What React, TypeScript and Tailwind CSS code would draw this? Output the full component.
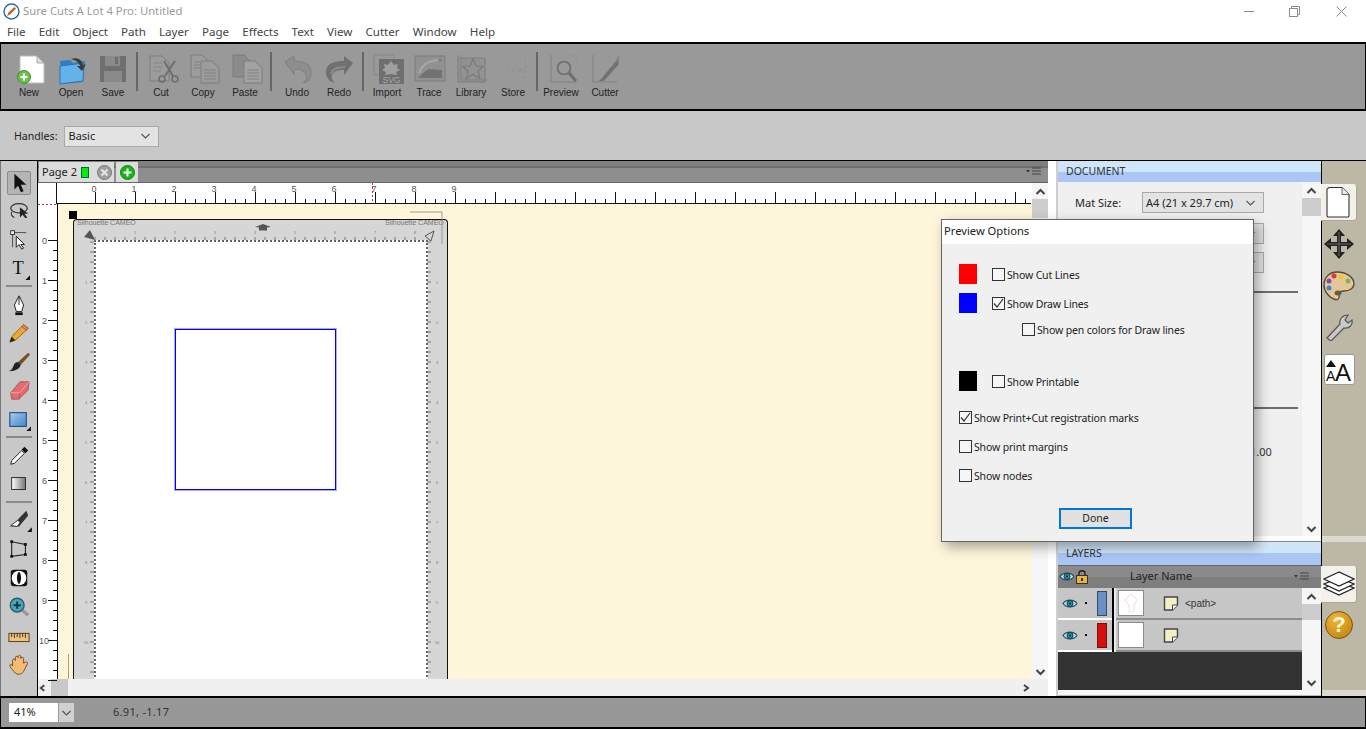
import React from "react";

const ui = { fontFamily: '"Noto Sans", "Liberation Sans", sans-serif' };
const arial = { fontFamily: '"Liberation Sans", Arial, sans-serif' };

const Chev = ({ dir = "down", c = "#444", w = 2 }: { dir?: string; c?: string; w?: number }) => (
  <svg width="11" height="8" viewBox="0 0 11 8">
    <path
      d={dir === "down" ? "M1.5 2 L5.5 6 L9.5 2" : dir === "up" ? "M1.5 6 L5.5 2 L9.5 6" : dir === "left" ? "M7 1 L3 4 L7 7" : "M4 1 L8 4 L4 7"}
      fill="none"
      stroke={c}
      strokeWidth={w}
    />
  </svg>
);

const GD = "#7c7c7c";
const GL = "#9c9c9c";

const Page = ({ x = 0, y = 0, w = 20, h = 26, f = GL, s = GD }: any) => (
  <path d={`M${x} ${y}h${w - 7}l7 7v${h - 7}h-${w}z`} fill={f} stroke={s} strokeWidth="1" />
);

const toolIcons: Record<string, React.ReactNode> = {
  New: (
    <>
      <path d="M7 2h17l7 7v20H7z" fill="#fff" stroke="#bbb" />
      <path d="M24 2v7h7z" fill="#ddd" stroke="#aaa" />
      <circle cx="11" cy="23" r="6.5" fill="#6cc04a" stroke="#3d8b2a" />
      <path d="M11 19.500v7M7.500 23h7" stroke="#fff" strokeWidth="2.2" />
    </>
  ),
  Open: (
    <>
      <path d="M3 7l10-1 3 3 12-2-2 21-22 2z" fill="#2f7fc6" />
      <path d="M3 12l24-3-1 18-23 3z" fill="#63b3ea" stroke="#2c75b5" />
      <path d="M14 5c6-2 11 0 12 6l3-1-4 7-5-5 3 0c-1-4-5-6-9-7z" fill="#3b3b3b" />
    </>
  ),
  Save: (
    <>
      <path d="M2 2h26v26H2z" fill="#6f6f6f" />
      <path d="M7 2h15v10H7z" fill="#8a8a8a" />
      <path d="M17 3h3v7h-3z" fill="#6f6f6f" />
      <path d="M6 17h18v11H6z" fill="#8a8a8a" />
    </>
  ),
  Cut: (
    <>
      <Page x={3} y={2} w={19} h={25} />
      <path d="M6 9h9M6 13h9M6 17h8" stroke="#858585" />
      <path d="M17 7l9 15M28 7l-10 15" stroke="#6e6e6e" strokeWidth="2" />
      <circle cx="15" cy="25" r="3" fill="none" stroke="#6e6e6e" strokeWidth="1.6" />
      <circle cx="28" cy="25" r="3" fill="none" stroke="#6e6e6e" strokeWidth="1.6" />
    </>
  ),
  Copy: (
    <>
      <Page x={1} y={1} w={18} h={22} />
      <Page x={11} y={7} w={18} h={22} />
      <path d="M14 16h12M14 19h12M14 22h12M14 25h12" stroke="#828282" />
      <path d="M4 8h6M4 11h6M4 14h6" stroke="#828282" />
    </>
  ),
  Paste: (
    <>
      <Page x={1} y={1} w={18} h={22} f="#8b8b8b" />
      <Page x={12} y={7} w={18} h={22} f="#a2a2a2" />
      <path d="M15 16h12M15 19h12M15 22h12M15 25h12" stroke="#828282" />
    </>
  ),
  Undo: (
    <path d="M3 8l9-6v5c9 0 17 3 17 12 0 5-3 9-8 10 3-2 4-5 3-8-1-5-6-6-12-6v5z" fill="#8e8e8e" stroke="#828282" strokeWidth="1.2" />
  ),
  Redo: (
    <>
      <path d="M29 9l-9-7v5C11 7 2 9 2 18c0 6 4 10 9 11-3-2-4-5-3-8 1-4 6-5 12-5v5z" fill="#707070" />
      <path d="M7 20c1-5 7-7 14-7" stroke="#8a8a8a" strokeWidth="2" fill="none" />
    </>
  ),
  Import: (
    <>
      <rect x="1" y="1" width="20" height="20" fill="none" stroke="#858585" />
      <rect x="6" y="5" width="25" height="25" fill="#6f6f6f" />
      <path d="M18 7l3 4 4-1-1 4 3 2-4 2 1 3-6-1-6 1 1-3-4-2 3-2-1-4 4 1z" fill="#a0a0a0" />
      <text x="18.5" y="29" textAnchor="middle" fontSize="8.500" fill="#a8a8a8" style={arial}>SVG</text>
    </>
  ),
  Trace: (
    <>
      <rect x="1" y="2" width="30" height="25" fill="#919191" stroke="#7d7d7d" />
      <path d="M5 19C8 11 14 6 26 6" fill="none" stroke="#a8a8a8" strokeWidth="2" />
      <path d="M10 18l5-3 13 1v8H4z" fill="#727272" />
      <circle cx="26" cy="6" r="1.500" fill="#777" />
    </>
  ),
  Library: (
    <>
      <path d="M2 2v26h27V4H5" fill="#929292" stroke="#7d7d7d" />
      <path d="M5 1v25h26" fill="none" stroke="#808080" />
      <path d="M17 5l3 7 7 .5-5 5 2 7-7-4-7 4 2-7-5-5 7-.5z" fill="none" stroke="#7a7a7a" strokeWidth="1.2" />
    </>
  ),
  Store: (
    <g stroke="#8e8e8e" strokeDasharray="2 3">
      <path d="M27 2v26M9 15h14M16 6v20" />
      <circle cx="22" cy="16" r="1" fill="#8e8e8e" />
    </g>
  ),
  Preview: (
    <>
      <path d="M3 1v27h25" fill="none" stroke="#808080" />
      <path d="M19 1l9 0v14" fill="none" stroke="#8e8e8e" strokeDasharray="2 2" />
      <circle cx="16" cy="14" r="6.500" fill="none" stroke="#6e6e6e" strokeWidth="1.6" />
      <path d="M21 19l7 8" stroke="#6e6e6e" strokeWidth="3" />
    </>
  ),
  Cutter: (
    <>
      <path d="M2 1v27h24" fill="none" stroke="#808080" />
      <path d="M10 25L25 7l3 3-15 17z" fill="#727272" />
      <path d="M25 7l3-6 0 9z" fill="#7c7c7c" />
      <path d="M8 27l2-2 3 2z" fill="#6e6e6e" />
    </>
  ),
};

const dx: Record<string, number> = { New: 0, Open: 2, Save: 1, Cut: 2, Copy: 3, Paste: 3, Undo: 1, Redo: 1, Import: 2, Trace: 1, Library: 1, Store: 1, Preview: 3, Cutter: 2 };

const ToolBtn = ({ name, mt = "" }: { name: string; mt?: string }) => (
  <div className={`w-[42px] flex flex-col items-center ${mt}`}>
    <svg width="32" height="32" viewBox="0 0 32 32" className="overflow-visible">
      <g transform={`translate(${dx[name]} 2)`}>{toolIcons[name]}</g>
    </svg>
    <div className="mt-[3px] text-[10px] leading-[12px] text-[#222]" style={arial}>{name}</div>
  </div>
);

const Sep = ({ w }: { w: string }) => (
  <div className={`${w} flex justify-center`}>
    <div className="w-[2px] h-[39px] bg-[#666]" />
  </div>
);

const side: Record<string, React.ReactNode> = {
  arrow: <path d="M7 2l0 17 4-4 3 7 3-1-3-7h6z" fill="#111" />,
  lasso: (
    <>
      <ellipse cx="12" cy="9" rx="9" ry="5" fill="none" stroke="#333" strokeWidth="1.4" />
      <path d="M4 13c-1 3 0 5 3 6" fill="none" stroke="#333" strokeWidth="1.2" />
      <path d="M13 8v11l3-3 3 4 2-1-3-4h4z" fill="#222" />
    </>
  ),
  node: (
    <>
      <rect x="3" y="3" width="4" height="4" fill="#fff" stroke="#222" />
      <path d="M7 5h13M5 7v14" stroke="#444" />
      <path d="M9 9v12l3-3 3 5 2-1-3-4h4z" fill="#fff" stroke="#111" />
    </>
  ),
  text: (
    <>
      <text x="11" y="19" textAnchor="middle" fontSize="20" fill="#111" style={{ fontFamily: '"Liberation Serif", serif' }}>T</text>
      <path d="M24 20v5h-5z" fill="#111" />
    </>
  ),
  pen: (
    <>
      <path d="M12 2l5 10-2 7H9L7 12z" fill="#fff" stroke="#111" strokeWidth="1" />
      <path d="M12 3v9" stroke="#111" />
      <rect x="8" y="20" width="8" height="3" fill="#111" />
    </>
  ),
  pencil: (
    <>
      <path d="M17 3l5 4L8 20l-6 2 2-6z" fill="#f0a62e" stroke="#9a5f0e" />
      <path d="M17 3l5 4-2 2-5-4z" fill="#e88080" stroke="#9a5f0e" />
      <path d="M4 16l-2 6 6-2z" fill="#222" />
    </>
  ),
  brush: (
    <>
      <path d="M22 2l2 2-10 11-3-3z" fill="#7a4d22" />
      <path d="M11 12l3 3c-1 4-5 7-13 7 4-2 4-4 5-6 1-3 3-4 5-4z" fill="#222" />
    </>
  ),
  eraser: (
    <>
      <path d="M3 15L13 3h10l-1 9-10 10H4z" fill="#e46b72" stroke="#a55" />
      <path d="M3 15h10l10-12" fill="none" stroke="#f3a6aa" />
      <path d="M13 15l-1 7" stroke="#a55" />
    </>
  ),
  rect: (
    <>
      <defs>
        <linearGradient id="rg" x1="0" y1="0" x2="1" y2="1">
          <stop offset="0" stopColor="#a9cdee" />
          <stop offset="1" stopColor="#3f86c6" />
        </linearGradient>
      </defs>
      <rect x="2" y="4" width="18" height="15" fill="url(#rg)" stroke="#1f4f82" strokeWidth="1.2" />
      <path d="M25 19v5h-5z" fill="#111" />
    </>
  ),
  drop: (
    <>
      <path d="M18 2l4 4-3 3-4-4z" fill="#111" />
      <path d="M15 6l3 3L7 20l-4 1 1-4z" fill="#fff" stroke="#111" />
    </>
  ),
  grad: (
    <>
      <defs>
        <linearGradient id="gg">
          <stop offset="0" stopColor="#fff" />
          <stop offset="1" stopColor="#777" />
        </linearGradient>
      </defs>
      <rect x="4" y="5" width="15" height="13" fill="url(#gg)" stroke="#222" />
    </>
  ),
  knife: (
    <>
      <path d="M20 2l2 5-10 12H2c4-2 8-5 10-9z" fill="#333" />
      <path d="M3 18l8-6 2 3-3 4z" fill="#fff" stroke="#333" />
      <path d="M26 20v5h-5z" fill="#111" />
    </>
  ),
  poly: (
    <>
      <path d="M4 4l15 3 0 11-15 2z" fill="none" stroke="#222" strokeWidth="1.2" />
      <rect x="2.500" y="2.500" width="3" height="3" fill="#111" />
      <rect x="17.500" y="5.500" width="3" height="3" fill="#111" />
      <rect x="17.500" y="16.500" width="3" height="3" fill="#111" />
      <rect x="2.500" y="18.500" width="3" height="3" fill="#111" />
    </>
  ),
  circ: (
    <>
      <rect x="3" y="3" width="18" height="18" rx="3" fill="#111" />
      <ellipse cx="12" cy="12" rx="8" ry="8" fill="#fff" />
      <path d="M12 5c-3 3-3 11 0 14 3-3 3-11 0-14z" fill="#111" />
    </>
  ),
  zoom: (
    <>
      <path d="M15 15l7 6" stroke="#999" strokeWidth="3.500" />
      <circle cx="10" cy="10" r="7.500" fill="#4aa6b5" stroke="#2c5a74" strokeWidth="1.600" />
      <path d="M10 6v8M6 10h8" stroke="#0c3a48" strokeWidth="2.200" />
    </>
  ),
  ruler: (
    <>
      <rect x="1" y="8" width="22" height="9" fill="#edc27e" stroke="#4a3a18" />
      <path d="M4 8v4M7 8v5M10 8v4M13 8v5M16 8v4M19 8v5" stroke="#3a2a10" />
    </>
  ),
  hand: (
    <path d="M5 13V7c0-2 3-2 3 0V4c0-2 3-2 3 0v-1c0-2 3-2 3 0v2c0-2 3-2 3 0v5l2-1c2-1 3 1 2 2l-4 8c-1 2-3 3-5 3h-2c-3-1-4-4-7-7l-1-2c0-2 2-2 3 0z" fill="#f4bb74" stroke="#6a4a20" />
  ),
};

const sideItems: [string, string][] = [
  ["arrow", "mt-[8px]"], ["lasso", ""], ["node", ""], ["text", "mt-[1px]"], ["SEP", "mt-[3px]"],
  ["pen", "mt-[4px]"], ["pencil", ""], ["brush", "mt-[1px]"], ["eraser", ""], ["rect", "mt-[2px]"], ["SEP", "mt-[2px]"],
  ["drop", "mt-[4px]"], ["grad", ""], ["SEP", "mt-[3px]"], ["knife", "mt-[3px]"], ["poly", "mt-[1px]"], ["circ", "mt-[1px]"],
  ["zoom", "mt-[1px]"], ["ruler", "mt-[2px]"], ["hand", ""],
];

const LeftTools = () => (
  <div className="w-[38px] shrink-0 flex flex-col items-center bg-[#c8c8c8] border-r border-black border-l border-l-[#777]">
    {sideItems.map(([n, m], i) =>
      n === "SEP" ? (
        <div key={i} className={`h-[2px] w-[26px] bg-[#8a8a8a] shrink-0 ${m}`} />
      ) : (
        <div key={i} className={`h-[28px] w-[26px] flex items-center justify-center shrink-0 ${m}`}>
          <div className={n === "arrow" ? "w-[24px] h-[24px] flex items-center justify-center rounded-[2px] bg-[#b4b4b4] border border-[#8c8c8c]" : ""}>
            <svg width="22" height="22" viewBox="0 0 24 24" className="overflow-visible">{side[n]}</svg>
          </div>
        </div>
      )
    )}
  </div>
);

const MenuIcon = () => (
  <svg width="16" height="9" viewBox="0 0 16 9">
    <path d="M0 3h4L2 5.500z" fill="#333" />
    <path d="M6 1h9M6 4h9M6 7h9" stroke="#444" />
  </svg>
);

const TopRuler = () => (
  <svg width="993" height="21" className="block">
    {Array.from({ length: 94 }, (_, i) => {
      const x = 57 + i * 10;
      const major = i % 4 === 0;
      return <line key={i} x1={x + 0.5} x2={x + 0.5} y1={major ? 9 : 16} y2={20} stroke="#111" />;
    })}
    {Array.from({ length: 10 }, (_, i) => (
      <text key={i} x={56 + i * 40} y={8.5} textAnchor="middle" fontSize="9" fill="#555" style={arial}>{i}</text>
    ))}
    <line x1="334.5" x2="334.5" y1="0" y2="20" stroke="#b33" strokeDasharray="2 2" />
    <line x1="18.5" x2="18.5" y1="0" y2="20" stroke="#111" />
    <line x1="18" x2="993" y1="20.5" y2="20.5" stroke="#111" />
  </svg>
);

const LeftRuler = () => (
  <div className="w-[20px] shrink-0 bg-white relative border-r border-black">
    <svg width="19" height="477" className="block">
      {Array.from({ length: 48 }, (_, i) => {
        const y = 36 + i * 10;
        const major = i % 4 === 0;
        return <line key={i} x1={major ? 10 : 15} x2={19} y1={y + 0.5} y2={y + 0.5} stroke="#111" />;
      })}
      {Array.from({ length: 11 }, (_, i) => (
        <text key={i} x={i === 10 ? 1 : 4} y={40 + i * 40} fontSize="9" fill="#555" style={arial}>{i}</text>
      ))}
      <line x1="0" x2="19" y1="0.5" y2="0.5" stroke="#b33" strokeDasharray="2 2" />
    </svg>
  </div>
);

const MatOverlay = () => (
  <svg width="375" height="461" className="absolute left-0 top-0 pointer-events-none overflow-visible">
    <text x="3" y="4.500" fontSize="7" fill="#777" style={arial}>Silhouette CAMEO</text>
    <text x="311" y="4.500" fontSize="7" fill="#777" style={arial}>Silhouette CAMEO</text>
    <path d="M336 -8h32v32" fill="none" stroke="#999" />
    <path d="M181 7l8-3 8 3-4 .5v3h-8v-3z" fill="#555" />
    <path d="M10 17l6-7 5 10z" fill="#555" />
    <path d="M351 16l9-5-3 10z" fill="none" stroke="#555" />
    {Array.from({ length: 33 }, (_, i) => (
      <line key={i} x1={21 + i * 10} x2={21 + i * 10} y1={17} y2={20} stroke="#777" />
    ))}
    {Array.from({ length: 44 }, (_, i) => (
      <g key={i} stroke="#777">
        <line x1="16" x2="20" y1={22 + i * 10} y2={22 + i * 10} />
        <line x1="353" x2="357" y1={22 + i * 10} y2={22 + i * 10} />
      </g>
    ))}
    {Array.from({ length: 8 }, (_, i) => (
      <text key={i} x={61 + i * 40} y={14} fontSize="4" fill="#777" textAnchor="middle" style={arial}>{i + 1}</text>
    ))}
    {Array.from({ length: 10 }, (_, i) => (
      <g key={i}>
        <text x="12" y={64 + i * 40} fontSize="4" fill="#777" textAnchor="middle" style={arial}>{i + 1}</text>
        <text x="363" y={64 + i * 40} fontSize="4" fill="#777" textAnchor="middle" style={arial}>{i + 1}</text>
      </g>
    ))}
  </svg>
);

const Canvas = () => (
  <div className="flex-1 relative overflow-hidden bg-[#fef6db] pl-[15px] pt-[15px]">
    <div className="relative w-[375px] h-[600px] rounded-t-[4px] border border-b-0 border-[#111] bg-[#d6d6d6] pl-[20px] pt-[20px]">
      <div className="w-[334px] h-[600px] bg-white border-t-2 border-x-2 border-dotted border-[#666] pl-[79px] pt-[87px]">
        <div className="w-[161px] h-[161px] border border-[#0000ff] shadow-[0_0_0_1px_rgba(40,40,230,0.4)]" />
      </div>
      <MatOverlay />
    </div>
    <div className="absolute left-[11px] top-[7px] w-[8px] h-[8px] bg-black" />
    <div className="absolute left-[10px] top-[450px] w-px h-[30px] bg-[#aaa07c]" />
  </div>
);

const VScroll = ({ w = "w-[16px]", thumbH }: { w?: string; thumbH: string }) => (
  <div className={`${w} shrink-0 self-stretch flex flex-col items-center bg-[#f6f6f6]`}>
    <div className="h-[16px] shrink-0 flex items-center pt-[2px]"><Chev dir="up" /></div>
    <div className="flex-1 w-full">
      <div className={`w-full bg-[#cdcdcd] ${thumbH}`} />
    </div>
    <div className="h-[14px] shrink-0 flex items-center"><Chev /></div>
  </div>
);

const Sel = ({ label, cls }: { label: string; cls: string }) => (
  <div className={`${cls} h-[21px] flex items-center justify-between bg-[#e3e3e3] border border-[#a9a9a9] pl-[3px] pr-[7px] text-[11px] text-[#222]`}>
    <span className="pt-[1px]">{label}</span>
    <Chev c="#555" w={1.2} />
  </div>
);

const PanelHeader = ({ t, h }: { t: string; h: string }) => (
  <div className={`${h} shrink-0 relative pl-[8px] flex items-center text-[10.500px] text-[#333] bg-[linear-gradient(#cfe5f8_0%,#cfe5f8_50%,#a9c6f4_50%,#a9c6f4_100%)]`}>{t}</div>
);

const Eye = () => (
  <svg width="16" height="11" viewBox="0 0 16 11">
    <path d="M1 5.500C4 1 12 1 15 5.500 12 10 4 10 1 5.500z" fill="#bfe3ec" stroke="#1d4f66" strokeWidth="1.200" />
    <circle cx="8" cy="5.500" r="3" fill="#2f8ea8" stroke="#10384a" />
    <circle cx="8" cy="5.500" r="1" fill="#06212c" />
  </svg>
);

const Note = () => (
  <svg width="16" height="15" viewBox="0 0 16 15">
    <path d="M1.500 1h13v8l-5 5h-8z" fill="#f2efc6" stroke="#444" strokeWidth="1.400" strokeLinejoin="round" />
    <path d="M14.500 9h-5v5" fill="#fff" stroke="#444" />
  </svg>
);

const LayerRow = ({ color, bd, thumb, label }: { color: string; bd: string; thumb: React.ReactNode; label?: string }) => (
  <div className="h-[32px] flex bg-[#c6c6c6]">
    <div className="w-[54px] flex items-center border-b-2 border-white">
      <div className="ml-[4px]"><Eye /></div>
      <div className="ml-[7px] w-[2px] h-[2px] bg-black" />
      <div className={`ml-[10px] w-[10px] h-[25px] ${color} border ${bd}`} />
    </div>
    <div className="w-[2px] bg-black" />
    <div className="w-[2px] bg-[#e9e9e9]" />
    <div className="flex-1 flex items-center border-b-2 border-[#8d8d8d]">
      <div className="w-[26px] h-[26px] bg-white border border-[#8a8a8a] flex items-center justify-center ml-[2px]">{thumb}</div>
      <div className="ml-[19px]"><Note /></div>
      {label && <span className="ml-[6px] text-[10px] text-[#333]" style={arial}>{label}</span>}
    </div>
  </div>
);

const RightPanels = () => (
  <div className="w-[263px] shrink-0 flex flex-col bg-white">
    <PanelHeader t="DOCUMENT" h="h-[21px]" />
    <div className="h-[354px] flex bg-[#f0f0f0] overflow-hidden">
      <div className="w-[244px] shrink-0">
        <div className="flex items-center mt-[10px] pl-[17px]">
          <span className="w-[67px] text-[11px] text-[#222] pt-[1px]">Mat Size:</span>
          <Sel label="A4 (21 x 29.7 cm)" cls="w-[122px]" />
        </div>
        <div className="ml-[84px]"><Sel label="" cls="w-[122px] mt-[10px]" /></div>
        <div className="ml-[84px]"><Sel label="" cls="w-[122px] mt-[8px]" /></div>
        <div className="h-[2px] bg-[#6d6d6d] ml-[6px] mr-[4px] mt-[18px]" />
        <div className="h-[2px] bg-[#6d6d6d] ml-[6px] mr-[4px] mt-[114px]" />
        <div className="mt-[36px] ml-[192px] text-[11px] leading-[14px] text-[#333]">1.00</div>
      </div>
      <VScroll w="w-[19px]" thumbH="h-[18px]" />
    </div>
    <div className="h-[6px] shrink-0 bg-white border-b border-[#8a8a8a]" />
    <PanelHeader t="LAYERS" h="h-[23px]" />
    <div className="h-[23px] shrink-0 flex items-center relative pb-[1px] text-[11px] text-[#222] bg-[linear-gradient(#8a8a8a_0%,#8a8a8a_50%,#7e7e7e_50%,#7e7e7e_100%)] border-t border-[#666]">
      <div className="ml-[1px]"><Eye /></div>
      <svg width="12" height="15" viewBox="0 0 12 15" className="ml-[1px]">
        <path d="M3 7V4c0-3 6-3 6 0v3" fill="none" stroke="#222" strokeWidth="1.400" />
        <rect x="0.500" y="6.500" width="11" height="8" fill="#e9b33e" stroke="#333" />
        <rect x="5" y="9" width="2" height="3" fill="#333" />
      </svg>
      <span className="ml-[42px]">Layer Name</span>
      <div className="ml-auto mr-[3px]"><MenuIcon /></div>
      <div className="w-[8px]" />
    </div>
    <div className="h-[102px] shrink-0 flex">
      <div className="w-[244px] shrink-0 flex flex-col bg-[#333]">
        <LayerRow
          color="bg-[#6a8fc4]"
          bd="border-[#344a70]"
          label="<path>"
          thumb={
            <svg width="22" height="22" viewBox="0 0 22 22">
              <path d="M11 2l6 6-3 5v7H9v-7L5 8z" fill="none" stroke="#f5dada" />
            </svg>
          }
        />
        <LayerRow color="bg-[#d60f0f]" bd="border-[#7a1010]" thumb={null} />
      </div>
      <VScroll w="w-[19px]" thumbH="h-[16px]" />
    </div>
    <div className="flex-1 bg-[#f6f6f6] border-b border-[#bbb]" />
  </div>
);

const RightTabs = () => (
  <div className="w-[45px] shrink-0 flex flex-col bg-[#bdb8a6] border-l border-black">
    <div className="h-[375px] shrink-0 flex flex-col">
      <div className="mt-[23px] w-[36px] h-[37px] ml-[-1px] bg-[#f3f1ea] rounded-r-[3px] border-b border-r border-[#aaa69a] flex items-center justify-center">
        <svg width="26" height="32" viewBox="0 0 26 32">
          <path d="M3 1.500h13l7 7v21a1.500 1.500 0 0 1-1.500 1.500h-19a1.500 1.500 0 0 1-1.500-1.500v-26.500z" fill="#fff" stroke="#333" strokeWidth="1.100" />
          <path d="M16 1.500v7h7" fill="#eee" stroke="#666" />
        </svg>
      </div>
      <svg width="30" height="30" viewBox="0 0 30 30" className="mt-[8px] ml-[2px]">
        <path d="M15 0l6 7h-4v6h6V9l7 6-7 6v-4h-6v6h4l-6 7-6-7h4v-6H7v4l-7-6 7-6v4h6V7H9z" fill="#222" />
        <path d="M15 3v24M3 15h24" stroke="#666" strokeWidth="1" />
      </svg>
      <svg width="32" height="32" viewBox="0 0 32 32" className="mt-[11px] ml-[1px]">
        <path d="M14 2C6 2 1 8 1 15s6 13 10 14c4 2 6-1 5-4s2-4 5-4c6 0 10-3 10-7C31 7 23 2 14 2z" fill="#e3c79a" stroke="#5b4a30" strokeWidth="1.400" />
        <circle cx="11" cy="6" r="2.500" fill="#d83a3a" />
        <circle cx="18" cy="7" r="2.500" fill="#edc63c" />
        <circle cx="25" cy="11" r="2.500" fill="#7fb550" />
        <circle cx="6" cy="11" r="2.500" fill="#7a4db0" />
        <circle cx="6" cy="18" r="2.500" fill="#3d86d0" />
        <ellipse cx="15" cy="23" rx="3.500" ry="2.500" fill="#6b5a40" />
      </svg>
      <svg width="28" height="28" viewBox="0 0 28 28" className="mt-[11px] ml-[3px]">
        <path d="M2 25l13-14c-1-4 2-9 8-9l-3 5 3 3 4-3c1 5-3 9-8 8L6 28z" fill="#c9c9c9" stroke="#555" strokeWidth="1.200" />
      </svg>
      <div className="mt-[13px] ml-[2px] w-[31px] h-[31px] rounded-[3px] bg-white border border-[#999] relative">
        <svg width="29" height="29" viewBox="0 0 29 29" className="overflow-visible">
          <text x="1" y="26" fontSize="14" fill="#111" style={arial}>A</text>
          <text x="10" y="26" fontSize="24" fill="#111" style={arial}>A</text>
          <path d="M6 5l5 7H1z" fill="#111" />
        </svg>
      </div>
    </div>
    <div className="h-[6px] shrink-0 bg-[#dcd9cd]" />
    <div className="h-[148px] shrink-0 flex flex-col">
      <div className="mt-[24px] w-[36px] h-[37px] ml-[-1px] bg-[#f3f1ea] rounded-r-[3px] border-b border-r border-[#aaa69a] flex items-center justify-center">
        <svg width="32" height="28" viewBox="0 0 32 28">
          <path d="M16 12L1 18l15 7 15-7z" fill="#fff" stroke="#222" strokeWidth="1.300" />
          <path d="M16 8L1 14l15 7 15-7z" fill="#fff" stroke="#222" strokeWidth="1.300" />
          <path d="M16 2L1 9l15 7 15-7z" fill="#fff" stroke="#222" strokeWidth="1.300" />
        </svg>
      </div>
      <div className="mt-[8px] ml-[3px] w-[28px] h-[28px] rounded-full bg-[radial-gradient(circle_at_40%_30%,#f2b733,#b97c10)] border border-[#7a5410] flex items-center justify-center text-[#fff8dc] text-[22px] font-bold leading-none" style={arial}>?</div>
    </div>
    <div className="flex-1 bg-[#dcd9cd]" />
  </div>
);

const Check = ({ checked = false }: { checked?: boolean }) => (
  <div className="w-[13px] h-[13px] shrink-0 border border-[#333] bg-[#f6f6f6] flex items-center justify-center">
    {checked && (
      <svg width="11" height="11" viewBox="0 0 11 11">
        <path d="M1 5.500L4 9l6-8" fill="none" stroke="#333" strokeWidth="1.200" />
      </svg>
    )}
  </div>
);

const Opt = ({ label, checked, cls }: { label: string; checked?: boolean; cls: string }) => (
  <div className={`flex items-center h-[13px] ${cls}`}>
    <Check checked={checked} />
    <span className="ml-[2px] pt-[2px] text-[10.500px] tracking-[-0.15px] leading-[13px] text-[#222] whitespace-nowrap">{label}</span>
  </div>
);

const ColorOpt = ({ color, label, checked, cls }: { color: string; label: string; checked?: boolean; cls: string }) => (
  <div className={`flex items-center h-[20px] ml-[17px] ${cls}`}>
    <div className={`w-[18px] h-[20px] ${color}`} />
    <Opt label={label} checked={checked} cls="ml-[15px]" />
  </div>
);

const Dialog = () => (
  <div className="absolute left-[941px] top-[219px] w-[313px] h-[323px] border border-[#666] bg-[#f0f0f0] shadow-[4px_5px_12px_rgba(0,0,0,0.35)]">
    <div className="h-[24px] bg-white pl-[2px] pb-[1px] flex items-center text-[11.200px] text-[#222]">Preview Options</div>
    <ColorOpt color="bg-[#ff0000]" label="Show Cut Lines" cls="mt-[20px]" />
    <ColorOpt color="bg-[#0000ff]" label="Show Draw Lines" checked cls="mt-[9px]" />
    <Opt label="Show pen colors for Draw lines" cls="ml-[80px] mt-[10px]" />
    <ColorOpt color="bg-black" label="Show Printable" cls="mt-[35px]" />
    <Opt label="Show Print+Cut registration marks" checked cls="ml-[17px] mt-[20px]" />
    <Opt label="Show print margins" cls="ml-[17px] mt-[16px]" />
    <Opt label="Show nodes" cls="ml-[17px] mt-[16px]" />
    <div className="ml-[117px] mt-[26px] w-[73px] h-[21px] border-2 border-[#0078d7] bg-[#e1e1e1] flex items-center justify-center text-[10.500px] text-[#222]">Done</div>
  </div>
);

export default function App() {
  const menus = ["File", "Edit", "Object", "Path", "Layer", "Page", "Effects", "Text", "View", "Cutter", "Window", "Help"];
  return (
    <div className="relative w-[1366px] h-[729px] overflow-hidden flex flex-col bg-white" style={ui}>
      {/* title bar */}
      <div className="h-[22px] shrink-0 flex items-center pl-[3px] pt-[1px]">
        <svg width="17" height="17" viewBox="0 0 17 17">
          <circle cx="8.500" cy="8.500" r="7.500" fill="#fff" stroke="#1e6ea8" strokeWidth="1.400" />
          <path d="M4 13l1.500-3.500L11.500 4l1.500 1.500-6 6z" fill="#c25a22" />
        </svg>
        <span className="ml-[3px] text-[11.300px] text-[#9a9a9a]">Sure Cuts A Lot 4 Pro: Untitled</span>
        <div className="ml-auto flex items-center">
          <div className="w-[10px] h-px bg-[#8a8a8a]" />
          <svg width="11" height="11" viewBox="0 0 11 11" className="ml-[35px]">
            <path d="M2.500 2.500V.5h8v8h-2" fill="none" stroke="#8a8a8a" />
            <rect x="0.500" y="2.500" width="8" height="8" fill="none" stroke="#8a8a8a" />
          </svg>
          <svg width="11" height="11" viewBox="0 0 11 11" className="ml-[36px] mr-[19px]">
            <path d="M.5.5l10 10M10.500.5l-10 10" stroke="#8a8a8a" />
          </svg>
        </div>
      </div>
      {/* menu */}
      <div className="h-[20px] shrink-0 flex items-center pl-[7px] gap-[13.100px] text-[11.600px] text-[#444]">
        {menus.map((m) => <span key={m}>{m}</span>)}
      </div>
      {/* toolbar */}
      <div className="h-[69px] shrink-0 bg-[#999] border-t-2 border-b-2 border-x border-black pl-[7px] pt-[8px] flex items-start">
        {["New", "Open", "Save"].map((n) => <ToolBtn key={n} name={n} />)}
        <Sep w="w-[6px]" />
        {["Cut", "Copy", "Paste"].map((n) => <ToolBtn key={n} name={n} />)}
        <Sep w="w-[10px]" />
        {["Undo", "Redo"].map((n) => <ToolBtn key={n} name={n} />)}
        <Sep w="w-[6px]" />
        {["Import", "Trace", "Library", "Store"].map((n) => <ToolBtn key={n} name={n} />)}
        <Sep w="w-[6px]" />
        <ToolBtn name="Preview" />
        <ToolBtn name="Cutter" mt="ml-[2px]" />
      </div>
      {/* options */}
      <div className="h-[50px] shrink-0 bg-[#c8c8c8] border-b border-black flex items-center pl-[14px] pt-[1px]">
        <span className="text-[10.600px] text-[#222] pt-[1px]">Handles:</span>
        <Sel label="Basic" cls="w-[95px] ml-[7px]" />
      </div>
      {/* main */}
      <div className="h-[535px] shrink-0 flex">
        <LeftTools />
        <div className="w-[1020px] shrink-0 flex">
          <div className="w-[1010px] shrink-0 flex flex-col">
            <div className="h-[22px] shrink-0 flex bg-[linear-gradient(#808080_0%,#808080_25%,#707070_25%,#707070_35%,#8e8e8e_35%,#8e8e8e_100%)] border-b border-[#666]">
              <div className="w-[75px] ml-px h-[20px] mt-px bg-[#dcdcdc] flex items-center pl-[3px] text-[11px] text-[#222]">
                <span>Page 2</span>
                <div className="ml-[4px] w-[8px] h-[11px] bg-[#00f000] border border-[#064]" />
                <svg width="15" height="15" viewBox="0 0 15 15" className="ml-[8px]">
                  <circle cx="7.500" cy="7.500" r="7" fill="#9e9e9e" stroke="#777" />
                  <path d="M4.500 4.500l6 6M10.500 4.500l-6 6" stroke="#e8e8e8" strokeWidth="1.800" />
                </svg>
              </div>
              <div className="w-[22px] ml-[2px] h-[20px] mt-px bg-[#dcdcdc] flex items-center justify-center">
                <svg width="15" height="15" viewBox="0 0 15 15">
                  <circle cx="7.500" cy="7.500" r="7" fill="#19b319" stroke="#0c8a0c" />
                  <path d="M7.500 3.500v8M3.500 7.500h8" stroke="#fff" strokeWidth="2" />
                </svg>
              </div>
              <div className="ml-auto mr-[6px] self-center"><MenuIcon /></div>
            </div>
            <div className="flex-1 flex min-h-0">
              <div className="flex-1 flex flex-col min-w-0">
                <TopRuler />
                <div className="flex-1 flex min-h-0">
                  <LeftRuler />
                  <Canvas />
                </div>
              </div>
              <VScroll thumbH="h-[19px]" />
            </div>
            <div className="h-[17px] shrink-0 flex items-center bg-[#f0f0f0]">
              <div className="w-[13px] flex justify-center pr-[3px]"><Chev dir="left" /></div>
              <div className="w-[17px] h-full bg-[#c8c8c8]" />
              <div className="ml-auto mr-[17px]"><Chev dir="right" /></div>
            </div>
          </div>
          <div className="w-[10px] shrink-0 bg-white border-r-2 border-[#cfcfcf]" />
        </div>
        <RightPanels />
        <RightTabs />
      </div>
      {/* status */}
      <div className="flex-1 bg-[#989898] border-y-2 border-x border-black flex items-center pl-[8px]">
        <div className="w-[49px] h-[19px] bg-white flex items-center pl-[5px] text-[11px] text-[#222]">41%</div>
        <div className="w-[15px] h-[19px] bg-[#d0d0d0] ml-px flex items-center justify-center"><Chev c="#555" w={1.2} /></div>
        <span className="ml-[39px] text-[11px] text-[#333] tracking-[0.3px]">6.91, -1.17</span>
      </div>
      <Dialog />
    </div>
  );
}
